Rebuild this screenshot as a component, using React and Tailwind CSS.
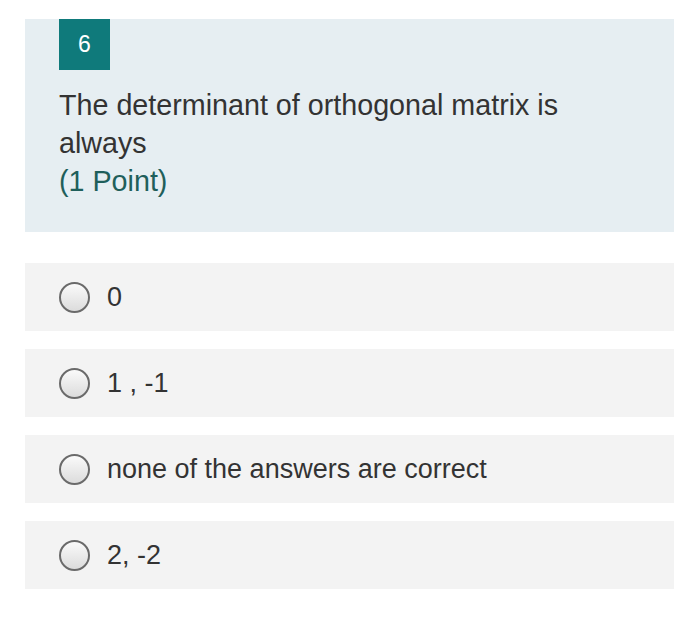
export default function App() {
  const options = ["0", "1 , -1", "none of the answers are correct", "2, -2"];
  return (
    <div className="w-[700px] h-[635px] bg-white font-['Liberation_Sans',Arial,sans-serif] pt-[19px] pl-[25px] pr-[26px]">
      <div className="bg-[#e6eef2] h-[213px] pl-[34px]">
        <div className="w-[51px] h-[51px] bg-[#0f7a7b] text-white text-[23px] flex items-center justify-center">6</div>
        <div className="mt-[16px] text-[28.7px] leading-[38px] text-[#333333]">
          The determinant of orthogonal matrix is<br />always
        </div>
        <div className="text-[28.7px] leading-[38px] text-[#1f5f5b]">(1 Point)</div>
      </div>
      <div className="mt-[31px] flex flex-col gap-[18px]">
        {options.map((o) => (
          <div key={o} className="h-[68px] bg-[#f3f3f3] flex items-center pl-[34px]">
            <div className="w-[31px] h-[31px] rounded-full border-2 border-[#6a6a6a] bg-gradient-to-b from-[#fafafa] to-[#dcdcdc]" />
            <span className="ml-[17px] text-[27px] text-[#333333]">{o}</span>
          </div>
        ))}
      </div>
    </div>
  );
}
